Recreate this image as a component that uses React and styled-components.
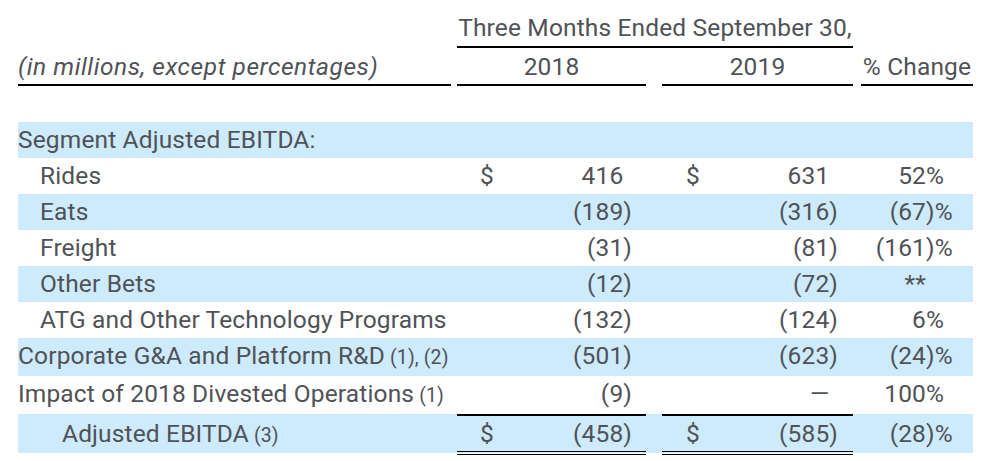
import React from "react";
import styled, { createGlobalStyle } from "styled-components";

const BLUE = "#cdebfc";
const INK = "#505257";
const COLS = "433px 6px 189px 16px 191px 8px 112px";

const GlobalStyle = createGlobalStyle`
  html, body { margin: 0; padding: 0; background: #ffffff; }
  body {
    font-family: Roboto, "Liberation Sans", Arial, sans-serif;
    font-size: 24.5px;
    letter-spacing: 0.15px;
    color: ${INK};
  }
`;

const Table = styled.div`
  width: 955px;
  margin-left: 18px;
`;

const Row = styled.div`
  display: grid;
  grid-template-columns: ${COLS};
  background: ${(p) => (p.$shade ? BLUE : "transparent")};
  line-height: 36px;
  white-space: nowrap;
`;

const TotalRow = styled(Row)`
  background: linear-gradient(${BLUE}, ${BLUE}) no-repeat top left / 100% calc(100% - 2px);
  line-height: 35px;
`;

const HeadTop = styled.div`
  display: grid;
  grid-template-columns: ${COLS};
  padding-top: 10px;
  line-height: 36px;
`;

const HeadBottom = styled.div`
  display: grid;
  grid-template-columns: ${COLS};
  line-height: 34px;
  margin-bottom: 36px;
  white-space: nowrap;
`;

const PeriodTitle = styled.div`
  grid-column: 3 / 6;
  text-align: center;
  border-bottom: 2px solid #000;
`;

const HeadCell = styled.div`
  grid-column: ${(p) => p.$col};
  padding-top: 2px;
  text-align: ${(p) => (p.$italic ? "left" : "center")};
  font-style: ${(p) => (p.$italic ? "italic" : "normal")};
  letter-spacing: ${(p) => (p.$italic ? "0.55px" : "0.15px")};
  border-bottom: 2px solid #000;
`;

const Label = styled.div`
  grid-column: 1;
  padding-left: ${(p) => p.$level * 22}px;
  padding-top: ${(p) => (p.$total ? 2 : 0)}px;
`;

const Note = styled.span`
  font-size: 19.5px;
`;

const Money = styled.div`
  grid-column: ${(p) => p.$col};
  display: flex;
  padding: 0 ${(p) => p.$pr}px 0 ${(p) => p.$pl}px;
  border-top: ${(p) => (p.$total ? "2px solid #000" : "0")};
  border-bottom: ${(p) => (p.$total ? "4px double #000" : "0")};
`;

const Currency = styled.span`
  width: 14px;
`;

const Amount = styled.span`
  flex: 1;
  text-align: right;
`;

const Paren = styled.span`
  visibility: ${(p) => (p.$show ? "visible" : "hidden")};
`;

const Pct = styled.div`
  grid-column: 7;
  display: flex;
  padding-top: ${(p) => (p.$total ? 2 : 0)}px;
`;

const PctValue = styled.span`
  width: 65px;
  text-align: right;
`;

const PctSuffix = styled.span`
  text-align: left;
`;

const rows = [
  { label: "Rides", level: 1, a: ["416", false, true], b: ["631", false, true], pct: ["52", "%"] },
  { label: "Eats", level: 1, a: ["189", true], b: ["316", true], pct: ["(67", ")%"] },
  { label: "Freight", level: 1, a: ["31", true], b: ["81", true], pct: ["(161", ")%"] },
  { label: "Other Bets", level: 1, a: ["12", true], b: ["72", true], pct: ["**", ""] },
  { label: "ATG and Other Technology Programs", level: 1, a: ["132", true], b: ["124", true], pct: ["6", "%"] },
  { label: "Corporate G&A and Platform R&D", note: "(1), (2)", level: 0, a: ["501", true], b: ["623", true], pct: ["(24", ")%"] },
  { label: "Impact of 2018 Divested Operations", note: "(1)", level: 0, a: ["9", true], b: ["—", false], pct: ["100", "%"] },
];

function MoneyCell({ col, pl, pr, data, total }) {
  const [v, neg, cur] = data;
  return (
    <Money $col={col} $pl={pl} $pr={pr} $total={total}>
      <Currency>{cur ? "$" : ""}</Currency>
      <Amount>{neg ? `(${v}` : v}</Amount>
      <Paren $show={neg}>)</Paren>
    </Money>
  );
}

function LabelCell({ row, total }) {
  return (
    <Label $level={row.level} $total={total}>
      {row.label}
      {row.note ? <Note> {row.note}</Note> : null}
    </Label>
  );
}

function PctCell({ pct, total }) {
  return (
    <Pct $total={total}>
      <PctValue>{pct[0]}</PctValue>
      <PctSuffix>{pct[1]}</PctSuffix>
    </Pct>
  );
}

export default function App() {
  const total = {
    label: "Adjusted EBITDA",
    note: "(3)",
    level: 2,
    a: ["458", true, true],
    b: ["585", true, true],
    pct: ["(28", ")%"],
  };
  return (
    <>
      <GlobalStyle />
      <Table>
        <HeadTop>
          <PeriodTitle>Three Months Ended September 30,</PeriodTitle>
        </HeadTop>
        <HeadBottom>
          <HeadCell $col={1} $italic>(in millions, except percentages)</HeadCell>
          <HeadCell $col={3}>2018</HeadCell>
          <HeadCell $col={5}>2019</HeadCell>
          <HeadCell $col={7}>% Change</HeadCell>
        </HeadBottom>
        <Row $shade>
          <Label $level={0}>Segment Adjusted EBITDA:</Label>
        </Row>
        {rows.map((r, i) => (
          <Row key={r.label} $shade={i % 2 === 1}>
            <LabelCell row={r} />
            <MoneyCell col={3} pl={23} pr={14} data={r.a} />
            <MoneyCell col={5} pl={24} pr={15} data={r.b} />
            <PctCell pct={r.pct} />
          </Row>
        ))}
        <TotalRow>
          <LabelCell row={total} total />
          <MoneyCell col={3} pl={23} pr={14} data={total.a} total />
          <MoneyCell col={5} pl={24} pr={15} data={total.b} total />
          <PctCell pct={total.pct} total />
        </TotalRow>
      </Table>
    </>
  );
}
